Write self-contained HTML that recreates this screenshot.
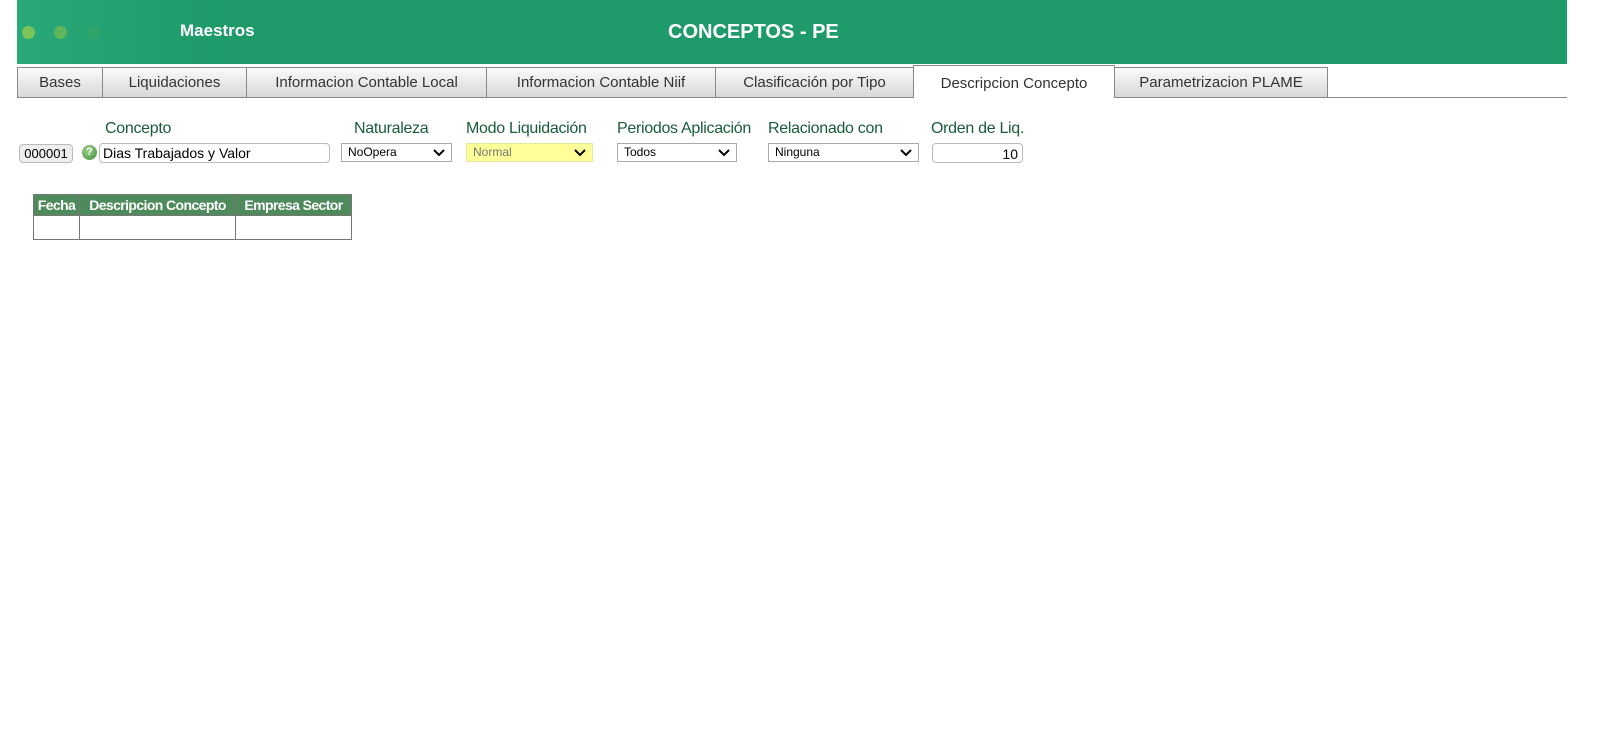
<!DOCTYPE html>
<html><head><meta charset="utf-8"><style>
body{margin:0;width:1614px;height:735px;background:#fff;font-family:"Liberation Sans",sans-serif;position:relative;overflow:hidden}
.hdr{position:absolute;left:17px;top:0;width:1550px;height:64px;background:#1f9b6b}
.glow{position:absolute;left:0;top:0;width:200px;height:64px;background:linear-gradient(90deg,#2aa877,#1f9b6b)}
.dot{position:absolute;top:26px;width:13px;height:13px;border-radius:50%}
.t{position:absolute;color:#fff;font-weight:bold}
.tab{position:absolute;top:67px;height:30px;box-sizing:border-box;border:1px solid #888;border-bottom:none;background:linear-gradient(#fafafa,#d8d8d8);color:#333;font-size:15px;text-align:center;line-height:30px}
.line{position:absolute;left:17px;top:97px;width:1550px;height:1px;background:#888}
.lbl{position:absolute;top:120px;color:#1a5c3a;font-size:16px;letter-spacing:-0.3px}
.sel{position:absolute;top:143px;height:19px;box-sizing:border-box;border:1px solid #aaa;background:#fff;font-size:12px;line-height:17px;padding-left:6px;color:#000}
.sel svg{position:absolute;right:6px;top:4px}
table{position:absolute;left:33px;top:194px;border-collapse:collapse;table-layout:fixed;font-family:"Liberation Sans",sans-serif}
th{background:#4e8a5c;color:#fff;font-size:14px;letter-spacing:-0.6px;font-weight:bold;border:1px solid #777;padding:0;height:20px;white-space:nowrap;overflow:hidden}
td{border:1px solid #777;height:21px}
</style></head><body>
<div class="hdr"><div class="glow"></div>
<div class="dot" style="left:5px;background:#7cc45a"></div>
<div class="dot" style="left:37px;background:#5fb65a"></div>
<div class="dot" style="left:70px;background:#2fa56a"></div>
<div class="t" style="left:163px;top:21px;font-size:17px">Maestros</div>
<div class="t" style="left:651px;top:21px;font-size:20px">CONCEPTOS - PE</div>
</div>
<div class="line"></div>
<div class="tab" style="left:17px;width:86px">Bases</div>
<div class="tab" style="left:102px;width:145px">Liquidaciones</div>
<div class="tab" style="left:246px;width:241px">Informacion Contable Local</div>
<div class="tab" style="left:486px;width:230px">Informacion Contable Niif</div>
<div class="tab" style="left:715px;width:199px">Clasificación por Tipo</div>
<div class="tab" style="left:913px;top:65px;height:33px;width:202px;background:#fff;line-height:35px">Descripcion Concepto</div>
<div class="tab" style="left:1114px;width:214px">Parametrizacion PLAME</div>

<div class="lbl" style="left:105px">Concepto</div>
<div class="lbl" style="left:354px">Naturaleza</div>
<div class="lbl" style="left:466px">Modo Liquidación</div>
<div class="lbl" style="left:617px">Periodos Aplicación</div>
<div class="lbl" style="left:768px">Relacionado con</div>
<div class="lbl" style="left:931px">Orden de Liq.</div>

<div style="position:absolute;left:19px;top:144px;width:54px;height:19px;box-sizing:border-box;border:1px solid #bbb;border-radius:4px;background:#eee;font-size:13px;line-height:17px;text-align:center">000001</div>
<div style="position:absolute;left:82px;top:145px;width:15px;height:15px;border-radius:50%;background:radial-gradient(circle at 40% 35%,#9ed48a,#3d8a3a);color:#fff;font-size:11px;font-weight:bold;text-align:center;line-height:15px">?</div>
<div style="position:absolute;left:99px;top:143px;width:231px;height:20px;box-sizing:border-box;border:1px solid #bbb;border-radius:4px;font-size:14px;line-height:19px;padding-left:3px">Dias Trabajados y Valor</div>
<div class="sel" style="left:341px;width:111px">NoOpera<svg width="12" height="9"><path d="M1 2l5 5 5-5" stroke="#000" stroke-width="2" fill="none"/></svg></div>
<div class="sel" style="left:466px;width:127px;background:#ffff99;border-color:#e8e8a0;color:#777">Normal<svg width="12" height="9"><path d="M1 2l5 5 5-5" stroke="#000" stroke-width="2" fill="none"/></svg></div>
<div class="sel" style="left:617px;width:120px">Todos<svg width="12" height="9"><path d="M1 2l5 5 5-5" stroke="#000" stroke-width="2" fill="none"/></svg></div>
<div class="sel" style="left:768px;width:151px">Ninguna<svg width="12" height="9"><path d="M1 2l5 5 5-5" stroke="#000" stroke-width="2" fill="none"/></svg></div>
<div style="position:absolute;left:932px;top:143px;width:91px;height:20px;box-sizing:border-box;border:1px solid #bbb;border-radius:4px;font-size:14px;line-height:20px;text-align:right;padding-right:4px">10</div>

<table><colgroup><col style="width:46px"><col style="width:156px"><col style="width:116px"></colgroup><tr><th>Fecha</th><th>Descripcion Concepto</th><th>Empresa Sector</th></tr><tr><td></td><td></td><td></td></tr></table>
</body></html>
